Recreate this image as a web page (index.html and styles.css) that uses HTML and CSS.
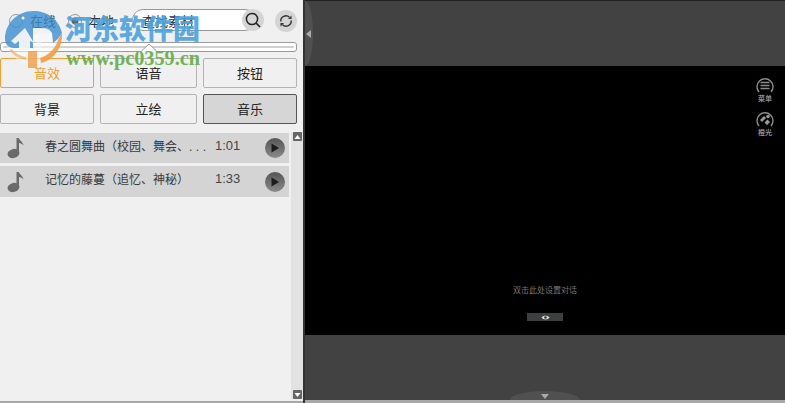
FILE: index.html
```html
<!DOCTYPE html>
<html lang="zh">
<head>
<meta charset="utf-8">
<title>音频素材</title>
<link rel="stylesheet" href="styles.css">
</head>
<body>
<div class="app">
  <aside class="side">
    <div class="toolbar">
      <label class="radio"><span class="dot"></span>在线</label>
      <label class="radio radio-local"><span class="dot dot-on"></span>本地</label>
      <div class="search">
        <span class="search-text">查找素材</span>
        <span class="round round-search">
          <svg width="18" height="18" viewBox="0 0 18 18"><circle cx="8" cy="8" r="5.6" fill="none" stroke="#222" stroke-width="1.5"/><path d="M12 12l4 4" stroke="#222" stroke-width="1.7"/></svg>
        </span>
      </div>
      <span class="round round-refresh">
        <svg width="16" height="16" viewBox="0 0 16 16"><path d="M2.800 8.500A5.200 5.200 0 0 1 11.500 4.200" fill="none" stroke="#333" stroke-width="1.400"/><path d="M13.200 7.500A5.200 5.200 0 0 1 4.500 11.800" fill="none" stroke="#333" stroke-width="1.400"/><path d="M10 6h3.500V2.500zM6 10H2.500v3.500z" fill="#333"/></svg>
      </span>
    </div>
    <div class="slider"><div class="slider-line"></div><svg class="slider-thumb" width="18" height="9" viewBox="0 0 18 9"><path d="M1 9L9 1l8 8z" fill="#fff"/><path d="M1.500 8L9 1l7.500 7" fill="none" stroke="#9a9a9a"/></svg></div>
    <div class="tabs">
      <button class="tab tab-active">音效</button>
      <button class="tab">语音</button>
      <button class="tab">按钮</button>
      <button class="tab">背景</button>
      <button class="tab">立绘</button>
      <button class="tab tab-on">音乐</button>
    </div>
    <div class="list-area">
      <ul class="list">
        <li class="row">
          <svg class="note" width="20" height="22" viewBox="0 0 20 22"><ellipse cx="7.500" cy="16.500" rx="6" ry="4.500" transform="rotate(-15 7.500 16.500)" fill="#6a6a6a"/><path d="M10.500 16V1h2.200c.8 2.500 3.500 3 5 7.500-1.500-1.500-3-2.500-4.700-2.500v10z" fill="#6a6a6a"/></svg>
          <span class="name">春之圆舞曲（校园、舞会、<span class="dots">...</span></span>
          <span class="time">1:01</span>
          <span class="play"><svg width="10" height="10" viewBox="0 0 10 10"><path d="M1.500 0.500L9 5l-7.500 4.500z" fill="#1c1c1c"/></svg></span>
        </li>
        <li class="row">
          <svg class="note" width="20" height="22" viewBox="0 0 20 22"><ellipse cx="7.500" cy="16.500" rx="6" ry="4.500" transform="rotate(-15 7.500 16.500)" fill="#6a6a6a"/><path d="M10.500 16V1h2.200c.8 2.500 3.500 3 5 7.500-1.500-1.500-3-2.500-4.700-2.500v10z" fill="#6a6a6a"/></svg>
          <span class="name">记忆的藤蔓（追忆、神秘）</span>
          <span class="time">1:33</span>
          <span class="play"><svg width="10" height="10" viewBox="0 0 10 10"><path d="M1.500 0.500L9 5l-7.500 4.500z" fill="#1c1c1c"/></svg></span>
        </li>
      </ul>
      <div class="scrollbar">
        <span class="sb-btn"><svg width="7" height="6" viewBox="0 0 7 6"><path d="M3.500 1L6.500 5H.5z" fill="#fff"/></svg></span>
        <span class="sb-btn"><svg width="7" height="6" viewBox="0 0 7 6"><path d="M3.500 5L6.500 1H.5z" fill="#fff"/></svg></span>
      </div>
    </div>
  </aside>
  <main class="stage">
    <div class="band band-top"><span class="hand-left"><i></i></span></div>
    <div class="screen">
      <div class="menu">
        <div class="menu-item">
          <svg width="18" height="17" viewBox="0 0 18 17"><path d="M3 15A8 8 0 1 1 15 15" fill="none" stroke="#8c8c8c" stroke-width="1.400"/><path d="M4.500 5.500h9M4.500 8.500h9M4.500 11.500h9" stroke="#8c8c8c" stroke-width="1.500"/></svg>
          <span>菜单</span>
        </div>
        <div class="menu-item">
          <svg width="18" height="17" viewBox="0 0 18 17"><path d="M3 15A8 8 0 1 1 15 15" fill="none" stroke="#8c8c8c" stroke-width="1.400"/><path d="M4 9l4-4 2 2-4 4zM8.500 11.500l3-3 2.500 2.500-3 3z" fill="#9a9a9a"/><circle cx="12" cy="5.500" r="1.800" fill="#9a9a9a"/></svg>
          <span>橙光</span>
        </div>
      </div>
      <div class="dialog">
        <p class="dialog-text">双击此处设置对话</p>
        <div class="dialog-btn"><svg width="9" height="7" viewBox="0 0 9 7"><path d="M.5 3.500C2 1 7 1 8.500 3.500 7 6 2 6 .5 3.500z" fill="#ddd"/><circle cx="4.500" cy="3.500" r="1.300" fill="#333"/></svg></div>
      </div>
    </div>
    <div class="band band-bottom"><span class="hand-down"><i></i></span></div>
  </main>
  <div class="watermark">
    <svg class="wm-logo" width="66" height="66" viewBox="0 0 66 66">
      <path d="M6 40C10 56 24 62 36 60c12-2 24-12 26-30L40 30z" fill="#fff" opacity=".5"/>
      <path d="M5 36C5 20 18 8 33 8c14 0 26 8 29 22-2 4-5 7-9 10l-1-10c-2-4-8-5-14-5h-5v20H14C8 45 5 41 5 36z" fill="#3a8fd2" opacity=".8"/>
      <path d="M25 25L11 38l4 3 4-3v9h11V38l4 2z" fill="#f4f4f4" opacity=".95"/>
      <path d="M37 25h6c5 0 8 2 8 5s-3 6-8 6h-2v9h-4z" fill="#f4f4f4" opacity=".55"/>
      <path d="M62 30c1 14-8 27-21 30l-1-5c9-3 15-9 18-18z" fill="#f0973a" opacity=".85"/>
      <path d="M28 48h9v17h-9z" fill="#f0973a" opacity=".75"/>
      <path d="M9 47c4 5 10 9 17 10v-3c-6-1-11-4-14-8z" fill="#f0973a" opacity=".55"/>
      <circle cx="23" cy="15" r="1.500" fill="#fff"/>
    </svg>
    <span class="wm-cn">河东软件园</span>
    <span class="wm-url">www.pc0359.cn</span>
  </div>
</div>
</body>
</html>
```
FILE: styles.css
```css
* { box-sizing: border-box; }
html, body { margin: 0; height: 100%; overflow: hidden; }
body { font-family: "Noto Sans CJK SC", "Liberation Sans", sans-serif; background: #f0f0f0; }
.app { position: relative; display: flex; width: 785px; height: 403px; overflow: hidden; }
.side { width: 303px; flex: none; background: #f0f0f0; display: flex; flex-direction: column; color: #333; }
.toolbar { height: 42px; display: flex; align-items: center; padding: 0 0 1px 9px; font-size: 13px; }
.radio { display: flex; align-items: center; gap: 7px; width: 59px; }
.radio-local { width: 64px; gap: 6px; }
.dot { width: 14px; height: 14px; border-radius: 50%; background: #eee; border: 1px solid #999; flex: none; }
.dot-on { background: radial-gradient(circle, #666 0 3px, #eee 4px); }
.search { width: 124px; height: 22px; margin-top: -1px; background: #fff; border: 1px solid #999; border-radius: 11px; display: flex; align-items: center; padding-left: 9px; position: relative; }
.search-text { font-size: 13px; color: #333; }
.round { width: 22px; height: 22px; border-radius: 50%; background: #d4d4d4; display: flex; align-items: center; justify-content: center; flex: none; }
.round-search { position: absolute; right: -9px; top: -1px; }
.round-refresh { margin-left: 19px; }
.slider { position: relative; height: 10px; margin: 0 6px 0 0; border: 1px solid #9a9a9a; border-radius: 3px; background: #fff; display: flex; align-items: center; padding: 0 2px; }
.slider-line { height: 2px; width: 100%; background: #d0d0d0; border-radius: 2px; }
.slider-thumb { position: absolute; left: 139px; top: 0; }
.tabs { margin-top: 6px; width: 297px; display: grid; grid-template-columns: 94px 97px 94px; grid-auto-rows: 30px; column-gap: 6px; row-gap: 6px; }
.tab { font: inherit; font-size: 13px; color: #222; padding: 0 0 1px; background: #f0f0f0; border: 1px solid #b4b4b4; border-radius: 2px; }
.tab-active { border-color: #f0a030; color: #f0a030; }
.tab-on { background: #d6d6d6; border-color: #555; }
.list-area { flex: 1; min-height: 0; display: flex; margin-top: 8px; padding-bottom: 2px; border-bottom: 2px solid #a8a8a8; }
.list { list-style: none; margin: 1px 2px 0 0; padding: 0; width: 289px; flex: none; display: flex; flex-direction: column; gap: 3px; }
.row { height: 30px; background: #d4d4d4; display: flex; align-items: center; font-size: 12px; color: #3a3a3a; }
.row + .row { height: 31px; }
.note { flex: none; margin-left: 6px; }
.name { width: 170px; margin: -6px 0 0 19px; white-space: nowrap; overflow: hidden; font-family: "Noto Sans CJK KR", "Noto Sans CJK SC", sans-serif; }
.dots { letter-spacing: 3.500px; font-family: "Liberation Sans", sans-serif; }
.time { width: 50px; margin-top: -6px; font-size: 13px; color: #444; font-family: "Liberation Sans", sans-serif; }
.play { width: 20px; height: 20px; border-radius: 50%; background: linear-gradient(#555, #8a8a8a); display: flex; align-items: center; justify-content: center; flex: none; }
.scrollbar { width: 12px; flex: none; background: #e2e2e2; display: flex; flex-direction: column; justify-content: space-between; align-items: center; }
.sb-btn { width: 9px; height: 9px; background: #666; border-radius: 1px; display: flex; align-items: center; justify-content: center; }
.stage { flex: 1; margin-left: 2px; background: #424242; display: flex; flex-direction: column; box-shadow: -2px 0 0 #333; }
.band { flex: none; position: relative; background: #424242; }
.band-top { height: 66px; border-top: 1px solid #222; }
.band-bottom { height: 68px; border-bottom: 3px solid #a8a8a8; }
.screen { flex: 1; background: #000; position: relative; display: flex; flex-direction: column; }
.hand-left { position: absolute; left: 0; top: 0; width: 8px; height: 65px; background: #505050; border-radius: 0 100% 100% 0 / 0 50% 50% 0; display: flex; align-items: center; }
.hand-left i { width: 0; height: 0; border: 4px solid transparent; border-left: 0; border-right: 5px solid #aaa; margin-left: 1px; }
.hand-down { position: absolute; left: 205px; bottom: 0; width: 70px; height: 9px; background: #505050; border-radius: 50% 50% 0 0 / 100% 100% 0 0; display: flex; justify-content: center; align-items: flex-end; padding-bottom: 1px; }
.hand-down i { width: 0; height: 0; border: 4px solid transparent; border-bottom: 0; border-top: 5px solid #aaa; }
.menu { position: absolute; right: 11px; top: 11px; display: flex; flex-direction: column; gap: 9px; align-items: center; color: #8c8c8c; font-size: 7px; line-height: 8px; font-weight: 700; }
.menu-item { display: flex; flex-direction: column; align-items: center; }
.dialog { margin-top: auto; padding-bottom: 14px; display: flex; flex-direction: column; align-items: center; }
.dialog-text { margin: 0 0 17px; font-size: 8px; line-height: 12px; color: #777; }
.dialog-btn { width: 36px; height: 8px; background: #3c3f40; display: flex; align-items: center; justify-content: center; }
.watermark { position: absolute; left: 0; top: 0; width: 210px; height: 70px; pointer-events: none; }
.wm-logo { position: absolute; left: 0; top: 3px; }
.wm-cn { position: absolute; left: 65px; top: 10px; font-size: 27px; line-height: 36px; font-weight: 900; color: #4aa3e0; opacity: .9; white-space: nowrap; font-family: "Noto Sans CJK SC", sans-serif; }
.wm-url { position: absolute; left: 66px; top: 48px; font-size: 20.300px; line-height: 20px; font-weight: 700; color: #6ab04c; font-family: "Liberation Serif", serif; white-space: nowrap; opacity: .95; }
```
